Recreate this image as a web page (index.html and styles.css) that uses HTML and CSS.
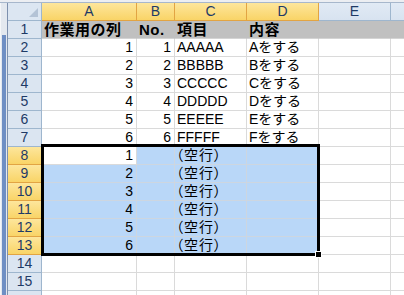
FILE: index.html
```html
<!DOCTYPE html>
<html lang="ja">
<head>
    <meta charset="UTF-8">
    <title>Sheet1</title>
    <link rel="stylesheet" href="styles.css">
</head>
<body>
    <div class="window">
        <!-- Top edge of the workbook window -->
        <div class="topbar"></div>

        <div class="main">
            <!-- Left window frame -->
            <div class="frame"><div class="frame-bar"></div></div>

            <!-- Worksheet grid -->
            <div class="sheet">
                <!-- Column headers -->
                <div class="c corner"><span class="corner-tri"></span></div>
                <div class="c hd on">A</div>
                <div class="c hd on">B</div>
                <div class="c hd on">C</div>
                <div class="c hd on">D</div>
                <div class="c hd">E</div>
                <div class="c hd"></div>

                <!-- Row 1: titles -->
                <div class="c rh">1</div>
                <div class="c t1">作業用の列</div>
                <div class="c t1">No.</div>
                <div class="c t1">項目</div>
                <div class="c t1">内容</div>
                <div class="c t1"></div>
                <div class="c t1"></div>

                <!-- Rows 2-7: data -->
                <div class="c rh">2</div>
                <div class="c num">1</div>
                <div class="c num">1</div>
                <div class="c">AAAAA</div>
                <div class="c">Aをする</div>
                <div class="c"></div>
                <div class="c"></div>

                <div class="c rh">3</div>
                <div class="c num">2</div>
                <div class="c num">2</div>
                <div class="c">BBBBB</div>
                <div class="c">Bをする</div>
                <div class="c"></div>
                <div class="c"></div>

                <div class="c rh">4</div>
                <div class="c num">3</div>
                <div class="c num">3</div>
                <div class="c">CCCCC</div>
                <div class="c">Cをする</div>
                <div class="c"></div>
                <div class="c"></div>

                <div class="c rh">5</div>
                <div class="c num">4</div>
                <div class="c num">4</div>
                <div class="c">DDDDD</div>
                <div class="c">Dをする</div>
                <div class="c"></div>
                <div class="c"></div>

                <div class="c rh">6</div>
                <div class="c num">5</div>
                <div class="c num">5</div>
                <div class="c">EEEEE</div>
                <div class="c">Eをする</div>
                <div class="c"></div>
                <div class="c"></div>

                <div class="c rh">7</div>
                <div class="c num">6</div>
                <div class="c num">6</div>
                <div class="c">FFFFF</div>
                <div class="c">Fをする</div>
                <div class="c"></div>
                <div class="c"></div>

                <!-- Rows 8-13: empty rows (selected) -->
                <div class="c rh on">8</div>
                <div class="c num active">1</div>
                <div class="c sel"></div>
                <div class="c sel blank">（空行）</div>
                <div class="c sel"></div>
                <div class="c"></div>
                <div class="c"></div>

                <div class="c rh on">9</div>
                <div class="c num sel">2</div>
                <div class="c sel"></div>
                <div class="c sel blank">（空行）</div>
                <div class="c sel"></div>
                <div class="c"></div>
                <div class="c"></div>

                <div class="c rh on">10</div>
                <div class="c num sel">3</div>
                <div class="c sel"></div>
                <div class="c sel blank">（空行）</div>
                <div class="c sel"></div>
                <div class="c"></div>
                <div class="c"></div>

                <div class="c rh on">11</div>
                <div class="c num sel">4</div>
                <div class="c sel"></div>
                <div class="c sel blank">（空行）</div>
                <div class="c sel"></div>
                <div class="c"></div>
                <div class="c"></div>

                <div class="c rh on">12</div>
                <div class="c num sel">5</div>
                <div class="c sel"></div>
                <div class="c sel blank">（空行）</div>
                <div class="c sel"></div>
                <div class="c"></div>
                <div class="c"></div>

                <div class="c rh on">13</div>
                <div class="c num sel">6</div>
                <div class="c sel"></div>
                <div class="c sel blank">（空行）</div>
                <div class="c sel"></div>
                <div class="c"></div>
                <div class="c"></div>

                <!-- Rows 14-16: blank (16 is only a sliver at the bottom edge) -->
                <div class="c rh">14</div>
                <div class="c"></div>
                <div class="c"></div>
                <div class="c"></div>
                <div class="c"></div>
                <div class="c"></div>
                <div class="c"></div>

                <div class="c rh">15</div>
                <div class="c"></div>
                <div class="c"></div>
                <div class="c"></div>
                <div class="c"></div>
                <div class="c"></div>
                <div class="c"></div>

                <div class="c rh"></div>
                <div class="c"></div>
                <div class="c"></div>
                <div class="c"></div>
                <div class="c"></div>
                <div class="c"></div>
                <div class="c"></div>

                <!-- Selection outline A8:D13 and fill handle -->
                <div class="selection"></div>
                <div class="fill-handle"></div>
            </div>
        </div>
    </div>
</body>
</html>
```

FILE: styles.css
```css
/* General Reset */
* {
    margin: 0;
    padding: 0;
    box-sizing: border-box;
}

body {
    width: 404px;
    height: 295px;
    overflow: hidden;
    background: #fff;
    font-family: "Liberation Sans", "Noto Sans CJK JP", sans-serif;
}

.window {
    display: flex;
    flex-direction: column;
    width: 404px;
    height: 295px;
    overflow: hidden;
}

.topbar {
    flex: none;
    height: 3px;
    background: #eceef2;
    border-bottom: 1px solid #a7b7cc;
}

.main {
    display: flex;
    flex: 1;
    min-height: 0;
}

/* Left frame with the blue bar */
.frame {
    flex: none;
    width: 8px;
    display: flex;
    flex-direction: column;
    padding-top: 32px;
    background: #e3e8ef;
    border-left: 1px solid #f4f6f9;
    border-right: 1px solid #7d90ae;
}

.frame-bar {
    flex: 1;
    width: 4px;
    margin-left: 1px;
    background: #6f8fc4;
}

/* Worksheet grid */
.sheet {
    position: relative;
    display: grid;
    grid-template-columns: 34px 95px 38px 72px 72px 72px 72px;
    grid-auto-rows: 18px;
    align-content: start;
}

.c {
    display: flex;
    align-items: flex-end;
    padding: 0 2px 0 2px;
    border-right: 1px solid #dadada;
    border-bottom: 1px solid #dadada;
    font-size: 14px;
    line-height: 17px;
    color: #000;
    white-space: nowrap;
    overflow: hidden;
}

.num {
    justify-content: flex-end;
    padding-right: 3px;
}

/* Headers */
.corner {
    position: relative;
    background: #dce6f2;
    border-right-color: #9eb6ce;
    border-bottom-color: #9eb6ce;
}

.corner-tri {
    position: absolute;
    right: 3px;
    bottom: 3px;
    width: 0;
    height: 0;
    border-left: 9px solid transparent;
    border-bottom: 9px solid #b4c3d6;
}

.hd,
.rh {
    justify-content: center;
    align-items: center;
    padding: 0;
    background: linear-gradient(to bottom, #e1eaf5, #d8e3f0);
    border-right-color: #9eb6ce;
    border-bottom-color: #9eb6ce;
    color: #1e3a66;
    font-size: 14px;
    line-height: 17px;
}

.rh {
    background: #dbe5f1;
}

.hd.on,
.rh.on {
    background: linear-gradient(to bottom, #fde69c, #f9d467);
    border-right-color: #e2a443;
    border-bottom-color: #e2a443;
}

/* Title row */
.t1 {
    background: #c0c0c0;
    border-right-color: #c0c0c0;
    border-bottom-color: #d4d4d4;
    font-weight: bold;
    font-size: 15px;
    letter-spacing: 0.5px;
}

/* Selected range */
.sel {
    background: #b9d7f8;
    border-right-color: #cdd6e0;
    border-bottom-color: #cdd6e0;
}

.blank {
    padding-left: 1px;
    font-feature-settings: "palt";
    letter-spacing: 1px;
}

.active {
    background: #fff;
}

.selection {
    position: absolute;
    left: 33px;
    top: 141px;
    width: 279px;
    height: 112px;
    border: 3px solid #000;
    pointer-events: none;
}

.fill-handle {
    position: absolute;
    left: 307px;
    top: 248px;
    width: 7px;
    height: 7px;
    background: #000;
    border: 1px solid #fff;
}
```
